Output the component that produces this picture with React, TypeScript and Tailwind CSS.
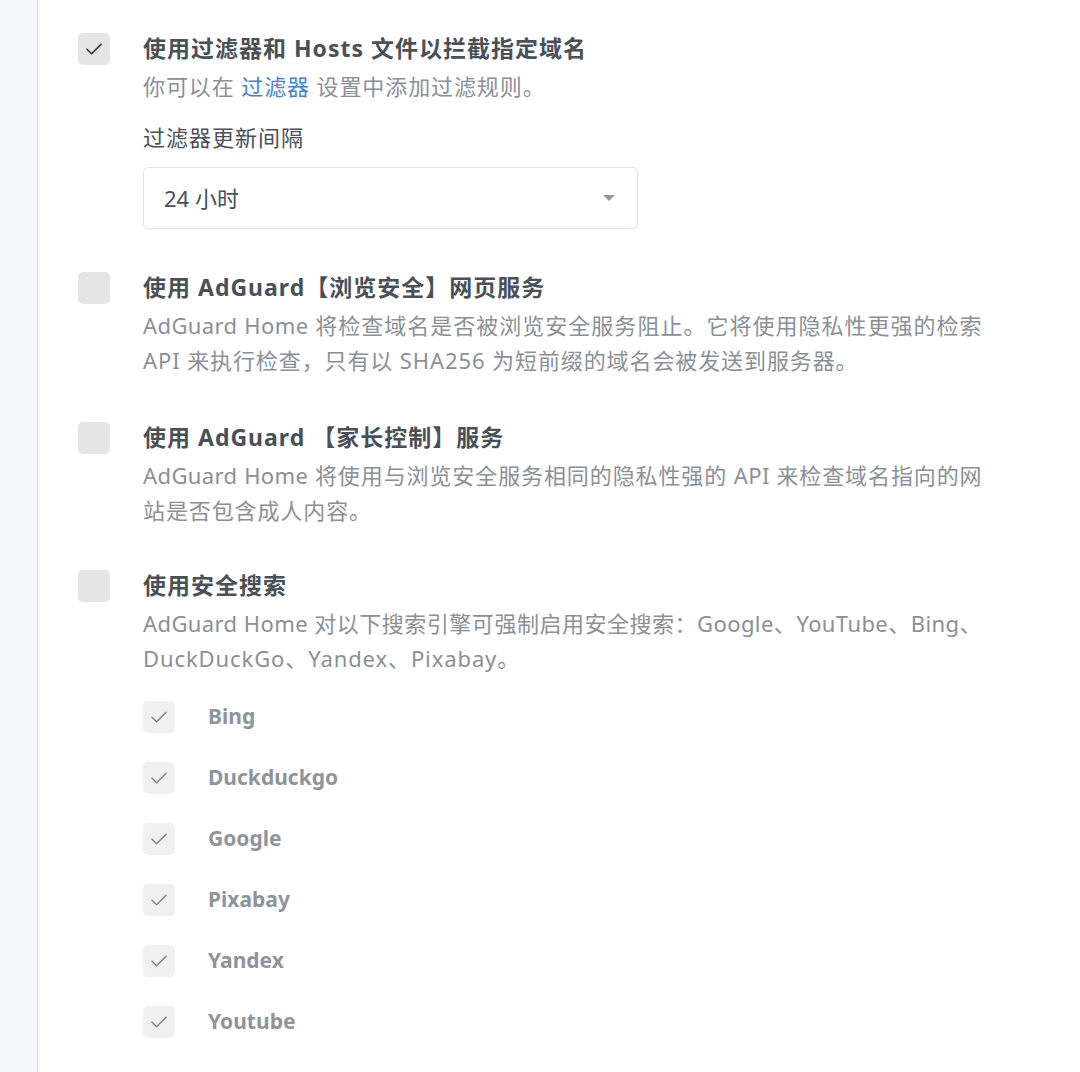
import React from "react";

const font = {
  fontFamily: '"Noto Sans", "Noto Sans CJK SC", sans-serif',
};

function Check({ checked, sub }: { checked: boolean; sub?: boolean }) {
  return (
    <div
      className={
        "w-[32px] h-[32px] rounded-[5px] flex items-center justify-center shrink-0 " +
        (sub ? "bg-[#f0f0f0]" : "bg-[#e5e5e5]")
      }
    >
      {checked && (
        <svg width="18" height="14" viewBox="0 0 18 14" fill="none">
          <path
            d="M2 7.2 L6.6 11.8 L16 2.4"
            stroke={sub ? "#8a8a8a" : "#333"}
            strokeWidth="1.6"
            strokeLinecap="round"
            strokeLinejoin="round"
          />
        </svg>
      )}
    </div>
  );
}

function Block({
  checked,
  title,
  lines,
  children,
  className,
}: {
  checked: boolean;
  title: string;
  lines: React.ReactNode[];
  children?: React.ReactNode;
  className?: string;
}) {
  return (
    <div className={"flex gap-[33px] " + (className || "")}>
      <Check checked={checked} />
      <div className="flex-1 min-w-0">
        <div className="text-[23px] leading-[30px] font-bold text-[#495057] tracking-[1px]">{title}</div>
        <div className="mt-[6px] text-[22px] leading-[35px] text-[#8b8f96]">
          {lines.map((l, i) => (
            <div
              key={i}
              className={
                lines.length > 1 && i < lines.length - 1
                  ? "whitespace-nowrap tracking-[0.4px] text-justify [text-align-last:justify]"
                  : "whitespace-nowrap tracking-[0.9px]"
              }
            >
              {l}
            </div>
          ))}
        </div>
        {children}
      </div>
    </div>
  );
}

export default function App() {
  const engines = ["Bing", "Duckduckgo", "Google", "Pixabay", "Yandex", "Youtube"];
  return (
    <div className="flex min-h-[1072px] bg-white" style={font}>
      <div className="w-[38px] shrink-0 bg-[#f5f7fb] border-r border-[#e3e7ee]" />
      <div className="w-[944px] pl-[40px] pt-[33px]">
        <Block
          checked
          title="使用过滤器和 Hosts 文件以拦截指定域名"
          lines={[
            <>
              你可以在 <span className="text-[#467fcf]">过滤器</span> 设置中添加过滤规则。
            </>,
          ]}
        >
          <div className="mt-[18px] text-[22px] leading-[30px] text-[#495057] tracking-[1px]">过滤器更新间隔</div>
          <div className="mt-[15px] w-[495px] h-[62px] border border-[#dfe3ea] rounded-[5px] flex items-center justify-between pl-[20px] pr-[22px]">
            <span className="text-[22px] text-[#495057]">24 小时</span>
            <svg width="12" height="7" viewBox="0 0 12 7">
              <path d="M0 0 L12 0 L6 6 Z" fill="#9a9a9a" />
            </svg>
          </div>
        </Block>

        <Block
          className="mt-[43px]"
          checked={false}
          title="使用 AdGuard【浏览安全】网页服务"
          lines={[
            "AdGuard Home 将检查域名是否被浏览安全服务阻止。它将使用隐私性更强的检索",
            "API 来执行检查，只有以 SHA256 为短前缀的域名会被发送到服务器。",
          ]}
        />

        <Block
          className="mt-[44px]"
          checked={false}
          title="使用 AdGuard 【家长控制】服务"
          lines={[
            "AdGuard Home 将使用与浏览安全服务相同的隐私性强的 API 来检查域名指向的网",
            "站是否包含成人内容。",
          ]}
        />

        <Block
          className="mt-[42px]"
          checked={false}
          title="使用安全搜索"
          lines={[
            "AdGuard Home 对以下搜索引擎可强制启用安全搜索：Google、YouTube、Bing、",
            "DuckDuckGo、Yandex、Pixabay。",
          ]}
        >
          <div className="mt-[25px] flex flex-col gap-[29px]">
            {engines.map((e) => (
              <div key={e} className="flex items-center gap-[33px]">
                <Check checked sub />
                <span className="text-[21px] font-bold text-[#8e949c]">{e}</span>
              </div>
            ))}
          </div>
        </Block>
      </div>
    </div>
  );
}
